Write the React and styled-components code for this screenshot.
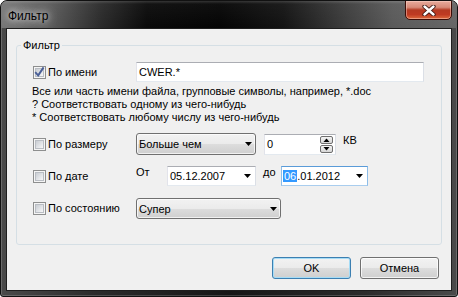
import React from 'react';
import styled, { createGlobalStyle } from 'styled-components';

const Global = createGlobalStyle`
  html, body { margin: 0; padding: 0; background: #ffffff; }
  body { font-family: "Liberation Sans", Arial, sans-serif; }
  * { box-sizing: border-box; }
`;

const Window = styled.div`
  width: 458px;
  height: 297px;
  display: flex;
  flex-direction: column;
  border: 1px solid #111;
  border-radius: 7px 7px 3px 3px;
  padding: 0 5px 5px;
  overflow: hidden;
  background: linear-gradient(90deg, #4a4a4a 0%, #2c2c2c 20%, #161616 50%, #2c2c2c 80%, #4a4a4a 100%);
  box-shadow: inset 0 0 0 1px rgba(255, 255, 255, 0.18);
`;

const TitleBar = styled.div`
  height: 27px;
  margin: 0 -5px;
  padding: 0 5px;
  display: flex;
  align-items: flex-start;
  background:
    linear-gradient(180deg, rgba(255,255,255,0.18) 0px, rgba(255,255,255,0.04) 3px, rgba(255,255,255,0) 27px),
    linear-gradient(90deg, #767676 0%, #5e5e5e 10%, #2a2a2a 22%, #0a0a0a 32%, #050505 48%, #141414 62%, #3e3e3e 76%, #5a5a5a 86%, #666 100%);
`;

const Title = styled.div`
  margin: 8px 0 0 2px;
  font-size: 12px;
  line-height: 14px;
  color: #000;
  text-shadow: 0 0 6px rgba(255,255,255,0.85), 0 0 12px rgba(255,255,255,0.6), 0 0 18px rgba(255,255,255,0.4);
`;

const CloseButton = styled.div`
  width: 47px;
  height: 20px;
  margin: -1px 0 0 auto;
  border: 1px solid #3b0d07;
  border-radius: 0 0 5px 5px;
  display: flex;
  align-items: center;
  justify-content: center;
  background: linear-gradient(180deg, #e8ab9c 0%, #d68a78 35%, #b53a22 50%, #bf3a22 75%, #dd6a3c 100%);
  box-shadow: inset 0 0 0 1px rgba(255, 220, 210, 0.45);
`;

const Client = styled.div`
  flex: 1;
  display: flex;
  flex-direction: column;
  background: #f0f0f0;
  border: 1px solid #1e1e1e;
  padding: 10px 9px 0 9px;
  font-size: 11px;
  color: #000;
`;

const Group = styled.fieldset`
  margin: 0;
  padding: 10px 15px 25px 15px;
  border: 1px solid #d5dfe5;
  border-radius: 3px;
  min-inline-size: 0;
`;

const Legend = styled.legend`
  padding: 0 2px;
  margin-left: -11px;
  font-size: 11px;
  line-height: 13px;
`;

const Row = styled.div`
  display: flex;
  align-items: center;
  height: ${p => p.$h}px;
  margin-top: ${p => p.$mt || 0}px;
`;

const CheckCell = styled.label`
  width: 104px;
  display: flex;
  align-items: center;
  gap: 2px;
  padding-left: 1px;
  flex: none;
`;

const Box = styled.span`
  width: 13px;
  height: 13px;
  border: 1px solid #8e8f8f;
  background: #f5f5f5;
  display: flex;
  align-items: center;
  justify-content: center;
  flex: none;
`;

const BoxInner = styled.span`
  width: 9px;
  height: 9px;
  border: 1px solid #b9bdc3;
  background: linear-gradient(135deg, #c9cdd3 0%, #e4e6e9 60%, #f7f7f7 100%);
  display: flex;
  align-items: center;
  justify-content: center;
  overflow: visible;
`;

const Text = styled.span`
  line-height: 13px;
  white-space: nowrap;
  align-self: ${p => (p.$top ? 'flex-start' : 'auto')};
  margin-top: ${p => p.$mt || 0}px;
  margin-left: ${p => p.$ml || 0}px;
  width: ${p => (p.$w ? `${p.$w}px` : 'auto')};
  flex: none;
`;

const TextInput = styled.div`
  width: ${p => p.$w}px;
  height: ${p => p.$h}px;
  margin-left: ${p => p.$ml || 0}px;
  border: 1px solid;
  border-color: #abadb3 #dbdfe6 #e3e9ef #e2e3ea;
  background: #fff;
  display: flex;
  align-items: center;
  padding: 0 2px;
  flex: none;
`;

const Desc = styled.div`
  margin-top: 3px;
  line-height: 13px;
`;

const Combo = styled.div`
  width: ${p => p.$w}px;
  height: ${p => p.$h}px;
  border: 1px solid #707070;
  border-radius: 3px;
  background: linear-gradient(180deg, #f2f2f2 0%, #ebebeb 50%, #dddddd 50%, #cfcfcf 100%);
  box-shadow: inset 0 0 0 1px rgba(255,255,255,0.7);
  display: flex;
  align-items: center;
  justify-content: space-between;
  padding: 0 3px 0 2px;
  flex: none;
`;

const DateField = styled.div`
  width: ${p => p.$w}px;
  height: 20px;
  border: 1px solid;
  border-color: ${p => (p.$focus ? '#5a9bd8 #8dbde8 #a9cdee #8dbde8' : '#abadb3 #dbdfe6 #e3e9ef #e2e3ea')};
  background: #fff;
  display: flex;
  align-items: center;
  justify-content: space-between;
  padding: 0 4px 0 2px;
  flex: none;
`;

const Selected = styled.span`
  background: #3399ff;
  color: #fff;
  padding: 0 1px;
  margin-left: -1px;
  line-height: 14px;
`;

const Spin = styled.div`
  width: 72px;
  height: 21px;
  margin-left: 8px;
  border: 1px solid;
  border-color: #abadb3 #dbdfe6 #e3e9ef #e2e3ea;
  background: #fff;
  display: flex;
  align-items: center;
  justify-content: space-between;
  padding: 0 2px 0 2px;
  flex: none;
`;

const SpinButtons = styled.div`
  display: flex;
  flex-direction: column;
  gap: 1px;
`;

const SpinButton = styled.div`
  width: 13px;
  height: 8px;
  border: 1px solid #6f6f6f;
  border-radius: 2px;
  background: linear-gradient(180deg, #f4f4f4, #d6d6d6);
  display: flex;
  align-items: center;
  justify-content: center;
`;

const ButtonRow = styled.div`
  display: flex;
  justify-content: flex-end;
  gap: 9px;
  margin-top: 12px;
  padding-right: 3px;
`;

const Button = styled.div`
  width: 79px;
  height: 22px;
  border: 1px solid ${p => (p.$default ? '#3c7fb1' : '#707070')};
  border-radius: 3px;
  background: linear-gradient(180deg, #f2f2f2 0%, #ebebeb 50%, #dddddd 50%, #cfcfcf 100%);
  box-shadow: inset 0 0 0 1px ${p => (p.$default ? '#a6dcf6' : 'rgba(255,255,255,0.75)')};
  display: flex;
  align-items: center;
  justify-content: center;
  font-size: 11px;
`;

const Arrow = () => (
  <svg width="7" height="4" viewBox="0 0 7 4">
    <path d="M0 0 H7 L3.5 4 Z" fill="#000" />
  </svg>
);

const SmallTri = ({ up }) => (
  <svg width="7" height="4" viewBox="0 0 7 4">
    <path d={up ? 'M0.5 4 H6.5 L3.5 0.5 Z' : 'M0.5 0 H6.5 L3.5 3.5 Z'} fill="#000" />
  </svg>
);

const Check = ({ checked, children }) => (
  <CheckCell>
    <Box>
      <BoxInner>
        {checked && (
          <svg width="9" height="9" viewBox="0 0 9 9" style={{ overflow: 'visible' }}>
            <path d="M0.2 4.2 L3.2 7.4 L8.6 -0.6" fill="none" stroke="#4a5f97" strokeWidth="1.9" />
          </svg>
        )}
      </BoxInner>
    </Box>
    <Text>{children}</Text>
  </CheckCell>
);

export default function App() {
  return (
    <>
      <Global />
      <Window>
        <TitleBar>
          <Title>Фильтр</Title>
          <CloseButton>
            <svg width="14" height="11" viewBox="0 0 14 11">
              <path d="M2.5 1.5 L11.5 9.5 M11.5 1.5 L2.5 9.5" stroke="#3a1510" strokeWidth="4.2" strokeLinecap="round" />
              <path d="M2.5 1.5 L11.5 9.5 M11.5 1.5 L2.5 9.5" stroke="#ffffff" strokeWidth="2.4" strokeLinecap="round" />
            </svg>
          </CloseButton>
        </TitleBar>
        <Client>
          <Group>
            <Legend>Фильтр</Legend>
            <Row $h={20}>
              <Check checked>По имени</Check>
              <TextInput $w={288} $h={20}>CWER.*</TextInput>
            </Row>
            <Desc>
              Все или часть имени файла, групповые символы, например, *.doc
              <br />? Соответствовать одному из чего-нибудь
              <br />* Соответствовать любому числу из чего-нибудь
            </Desc>
            <Row $h={22} $mt={9}>
              <Check>По размеру</Check>
              <Combo $w={120} $h={22}>
                <span>Больше чем</span>
                <Arrow />
              </Combo>
              <Spin>
                <span>0</span>
                <SpinButtons>
                  <SpinButton><SmallTri up /></SpinButton>
                  <SpinButton><SmallTri /></SpinButton>
                </SpinButtons>
              </Spin>
              <Text $top $mt={1} $ml={7}>КВ</Text>
            </Row>
            <Row $h={20} $mt={11}>
              <Check>По дате</Check>
              <Text $top $w={31}>От</Text>
              <DateField $w={89}>
                <span>05.12.2007</span>
                <Arrow />
              </DateField>
              <Text $top $ml={7} $w={18}>до</Text>
              <DateField $w={87} $focus>
                <span><Selected>06</Selected>.01.2012</span>
                <Arrow />
              </DateField>
            </Row>
            <Row $h={21} $mt={12}>
              <Check>По состоянию</Check>
              <Combo $w={145} $h={21}>
                <span>Супер</span>
                <Arrow />
              </Combo>
            </Row>
          </Group>
          <ButtonRow>
            <Button $default>OK</Button>
            <Button>Отмена</Button>
          </ButtonRow>
        </Client>
      </Window>
    </>
  );
}
